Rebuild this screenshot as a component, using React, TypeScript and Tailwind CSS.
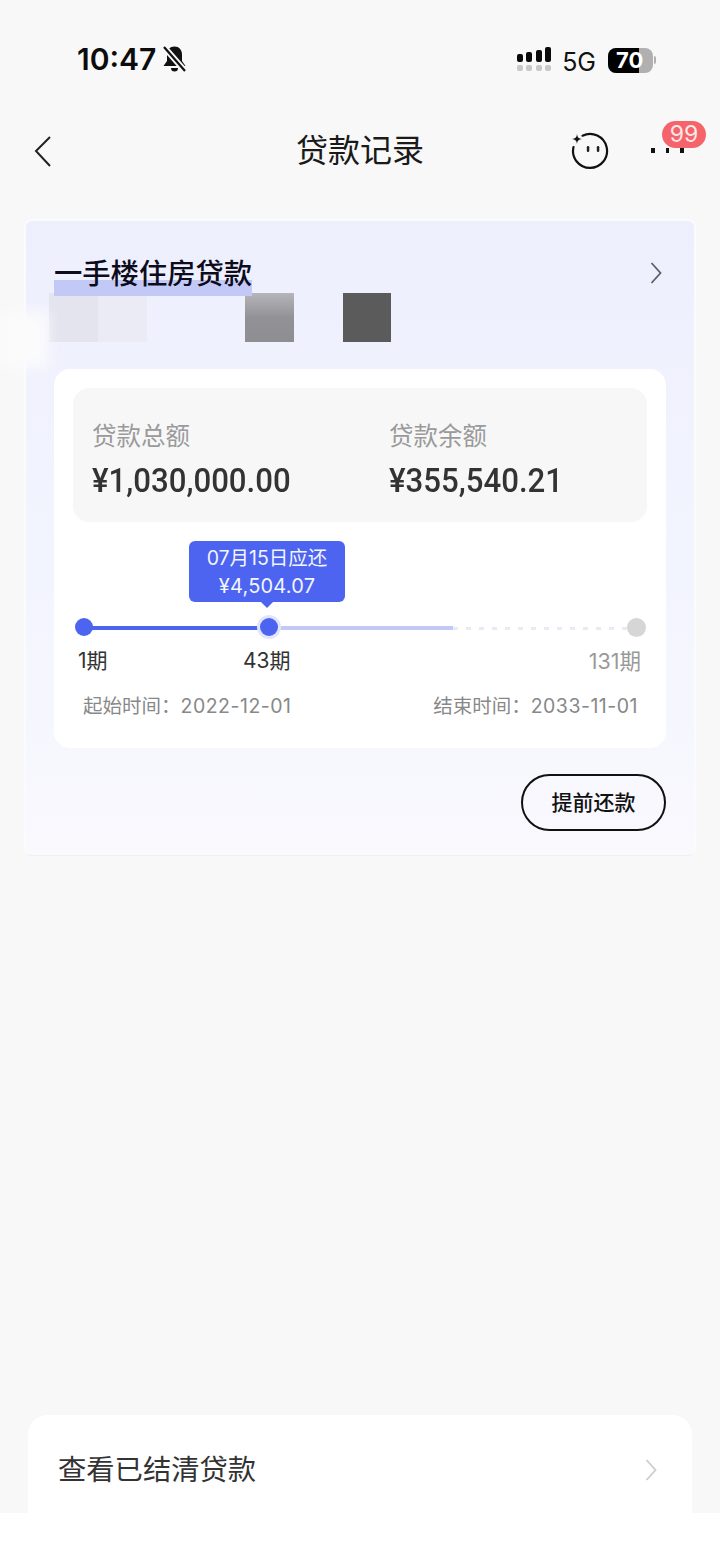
import React from 'react';

const cjk = "font-['Inter','Noto_Sans_CJK_SC',sans-serif]";

const StatusBar = () => (
  <div className="flex h-[110px] items-start justify-between pl-[77px] pr-[64px] pt-[41px]">
    <div className="flex items-center gap-[5px]">
      <span className="text-[30px] font-semibold leading-[36px] text-[#0c0c0c]">10:47</span>
      <svg width="27" height="28" viewBox="0 0 27 28" fill="none">
        <path d="M13.500 1.500c-4.500 0-7.500 3.500-7.500 8v6.500L2.500 21h22L21 16V9.500c0-4.500-3-8-7.500-8z" fill="#111" />
        <path d="M10 23h7a3.500 3.500 0 0 1-7 0z" fill="#111" />
        <path d="M3 2l21 24" stroke="#f8f8f8" strokeWidth="6" />
        <path d="M3 2l21 24" stroke="#111" strokeWidth="2.200" />
      </svg>
    </div>
    <div className="flex items-center pt-[3px]">
      <div className="mb-[2px] mr-[11px] grid grid-cols-4 gap-x-[3.500px] gap-y-[3px]">
        {[8, 10, 12, 15].map(h => (
          <div key={h} className="flex h-[15px] w-[6px] items-end">
            <div className="w-full rounded-[2px] bg-[#0a0a0a]" style={{ height: h }} />
          </div>
        ))}
        {[0, 1, 2, 3].map(i => (
          <div key={i} className="h-[6px] w-[6px] rounded-[2px] bg-[#c8c8c8]" />
        ))}
      </div>
      <span className="mr-[12px] mt-[4px] text-[25px] font-normal leading-[28px] text-[#111]">5G</span>
      <div className="relative flex h-[25px] w-[45px] overflow-hidden rounded-[8px] bg-[#b0b0b0]">
        <div className="h-full w-[31px] bg-black" />
        <span className="absolute left-[8px] top-0 text-[22px] font-bold leading-[25px] text-white">70</span>
      </div>
      <div className="ml-[1px] h-[8px] w-[2px] rounded-r-full bg-[#b0b0b0]" />
    </div>
  </div>
);

const NavBar = () => (
  <div className="relative flex h-[80px] items-center justify-center">
    <svg className="absolute left-[33px] top-[25px]" width="20" height="32" viewBox="0 0 20 32" fill="none">
      <path d="M17 2L3 16l14 15" stroke="#222" strokeWidth="2" />
    </svg>
    <span className="mt-[1px] text-[32px] font-normal leading-[40px] text-[#1a1a1a]">贷款记录</span>
    <svg className="absolute left-[570px] top-[22px]" width="40" height="38" viewBox="0 0 40 38" fill="none">
      <path d="M12.500 3.700A17 17 0 1 1 3.500 15" stroke="#111" strokeWidth="2.200" strokeLinecap="round" />
      <path d="M7 2c.5 3.500 1.500 4.500 5 5-3.500.5-4.500 1.500-5 5-.5-3.500-1.500-4.500-5-5 3.500-.5 4.500-1.500 5-5z" fill="#111" />
      <rect x="16.800" y="14" width="2.500" height="6" rx="1.200" fill="#222" />
      <rect x="26.800" y="14" width="2.500" height="6" rx="1.200" fill="#222" />
    </svg>
    <div className="absolute left-[651px] top-[38px] flex gap-[11px]">
      <div className="h-[5px] w-[3.500px] bg-[#111]" />
      <div className="h-[5px] w-[3.500px] bg-[#111]" />
      <div className="h-[5px] w-[3.500px] bg-[#111]" />
    </div>
    <div className="absolute left-[662px] top-[11px] flex h-[27px] w-[44px] items-center justify-center rounded-full bg-[#f4646a] text-[23px] leading-none text-[#fde8e8]">
      99
    </div>
  </div>
);

const Timeline = () => (
  <div className="relative mt-[19px] h-[170px]">
    <div className="absolute left-[135px] top-0 w-[156px] rounded-[6px] bg-[#4c64f0] pb-[2px] pt-[3px] text-center text-[20px] leading-[28px] text-[#f3f5ff]">
      <div className="text-[19.500px]">07月15日应还</div>
      <div className="tracking-[0.2px]">¥4,504.07</div>
      <div className="absolute left-[72px] top-[61px] h-0 w-0 border-x-[6px] border-t-[6px] border-x-transparent border-t-[#4c64f0]" />
    </div>
    <div className="absolute left-[36px] top-[85px] h-[4px] w-[180px] bg-[#4c64f0]" />
    <div className="absolute left-[216px] top-[85px] h-[4px] w-[183px] bg-[#c3c9f7]" />
    <div className="absolute left-[399px] top-[86px] flex gap-[8px]">
      {Array.from({ length: 14 }).map((_, i) => (
        <div key={i} className="h-[3px] w-[5px] bg-[#e9eaf3]" />
      ))}
    </div>
    <div className="absolute left-[21px] top-[77px] h-[18px] w-[18px] rounded-full bg-[#4c64f0]" />
    <div className="absolute left-[203px] top-[74px] h-[24px] w-[24px] rounded-full bg-[#e2e5fb]" />
    <div className="absolute left-[206px] top-[77px] h-[18px] w-[18px] rounded-full bg-[#4c64f0]" />
    <div className="absolute left-[573px] top-[77px] h-[19px] w-[19px] rounded-full bg-[#d6d6d6]" />
    <span className="absolute left-[24px] top-[106px] text-[21px] leading-[28px] text-[#333]">1期</span>
    <span className="absolute left-[189px] top-[106px] text-[21px] leading-[28px] text-[#333]">43期</span>
    <span className="absolute right-[25px] top-[106px] text-[21.500px] leading-[28px] text-[#999]">131期</span>
    <span className="absolute left-[29px] top-[151px] text-[19.500px] leading-[28px] text-[#888]">
      起始时间：<span className="tracking-[0.5px]">2022-12-01</span>
    </span>
    <span className="absolute right-[28px] top-[151px] text-[19.500px] leading-[28px] text-[#888]">
      结束时间：<span className="tracking-[0.5px]">2033-11-01</span>
    </span>
  </div>
);

const Amount = ({ label, value }: { label: string; value: string }) => (
  <div>
    <div className="text-[24.500px] leading-[36px] text-[#9a9a9a]">{label}</div>
    <div className="mt-[9px] origin-left scale-x-[0.945] whitespace-nowrap font-['Roboto',sans-serif] text-[33px] font-medium leading-[36px] text-[#333]">
      {value}
    </div>
  </div>
);

const LoanCard = () => (
  <div className="mx-[24px] mt-[29px] h-[637px] rounded-[8px] border-2 border-b border-[#fbfbfe] border-b-[#f0f0f4] bg-gradient-to-b from-[#eeeffd] via-[#f2f4fe] to-[#f9f9fe] px-[28px] pt-[32px]">
    <div className="relative flex h-[40px] items-center justify-between">
      <div className="absolute left-0 top-[27px] h-[16px] w-[198px] bg-[#c3c9f7]" />
      <span className="relative top-[1px] text-[28.300px] font-medium leading-[40px] text-[#0c0c1c]">一手楼住房贷款</span>
      <svg className="relative mr-[4px]" width="12" height="24" viewBox="0 0 12 24" fill="none">
        <path d="M1.500 2l9 10-9 10" stroke="#5c5f6c" strokeWidth="1.800" />
      </svg>
    </div>
    <div className="flex h-[50px] -ml-[5px]">
      <div className="h-[49px] w-[49px] bg-[#e3e4ee]" />
      <div className="h-[49px] w-[49px] bg-[#eaebf5]" />
      <div className="ml-[98px] h-[49px] w-[49px] bg-gradient-to-b from-[#b5b5ba] via-[#929296] to-[#8e8e92]" />
      <div className="ml-[49px] h-[49px] w-[48px] bg-[#5b5b5b]" />
    </div>
    <div className="mt-[26px] h-[379px] w-[612px] rounded-[16px] bg-white px-[19px] pt-[19px]">
      <div className="flex h-[134px] rounded-[16px] bg-[#f7f7f7] pl-[19px] pt-[30px]">
        <div className="w-[297px]">
          <Amount label="贷款总额" value="¥1,030,000.00" />
        </div>
        <Amount label="贷款余额" value="¥355,540.21" />
      </div>
      <div className="-mx-[19px]">
        <Timeline />
      </div>
    </div>
    <div className="mt-[26px] flex justify-end">
      <button className="flex h-[57px] w-[145px] items-center justify-center rounded-full border-2 border-[#111] text-[21px] font-medium text-[#111]">
        提前还款
      </button>
    </div>
  </div>
);

export default function App() {
  return (
    <div className={`${cjk} relative h-[1565px] w-[720px] overflow-hidden bg-white`}>
      <div className="flex h-[1513px] flex-col bg-[#f8f8f8]">
        <StatusBar />
        <NavBar />
        <LoanCard />
        <div className="mx-[28px] mt-auto flex h-[98px] items-center justify-between rounded-t-[20px] bg-white pl-[30px] pr-[35px] pt-[12px]">
          <span className="text-[28.300px] leading-[40px] text-[#333]">查看已结清贷款</span>
          <svg width="12" height="24" viewBox="0 0 12 24" fill="none">
            <path d="M1.500 2l9 10-9 10" stroke="#cdcdcd" strokeWidth="1.800" />
          </svg>
        </div>
      </div>
      {/* smear over the left edge of the card */}
      <div className="absolute left-0 top-[312px] h-[56px] w-[48px] bg-[#fbfbfc] blur-[7px]" />
    </div>
  );
}
